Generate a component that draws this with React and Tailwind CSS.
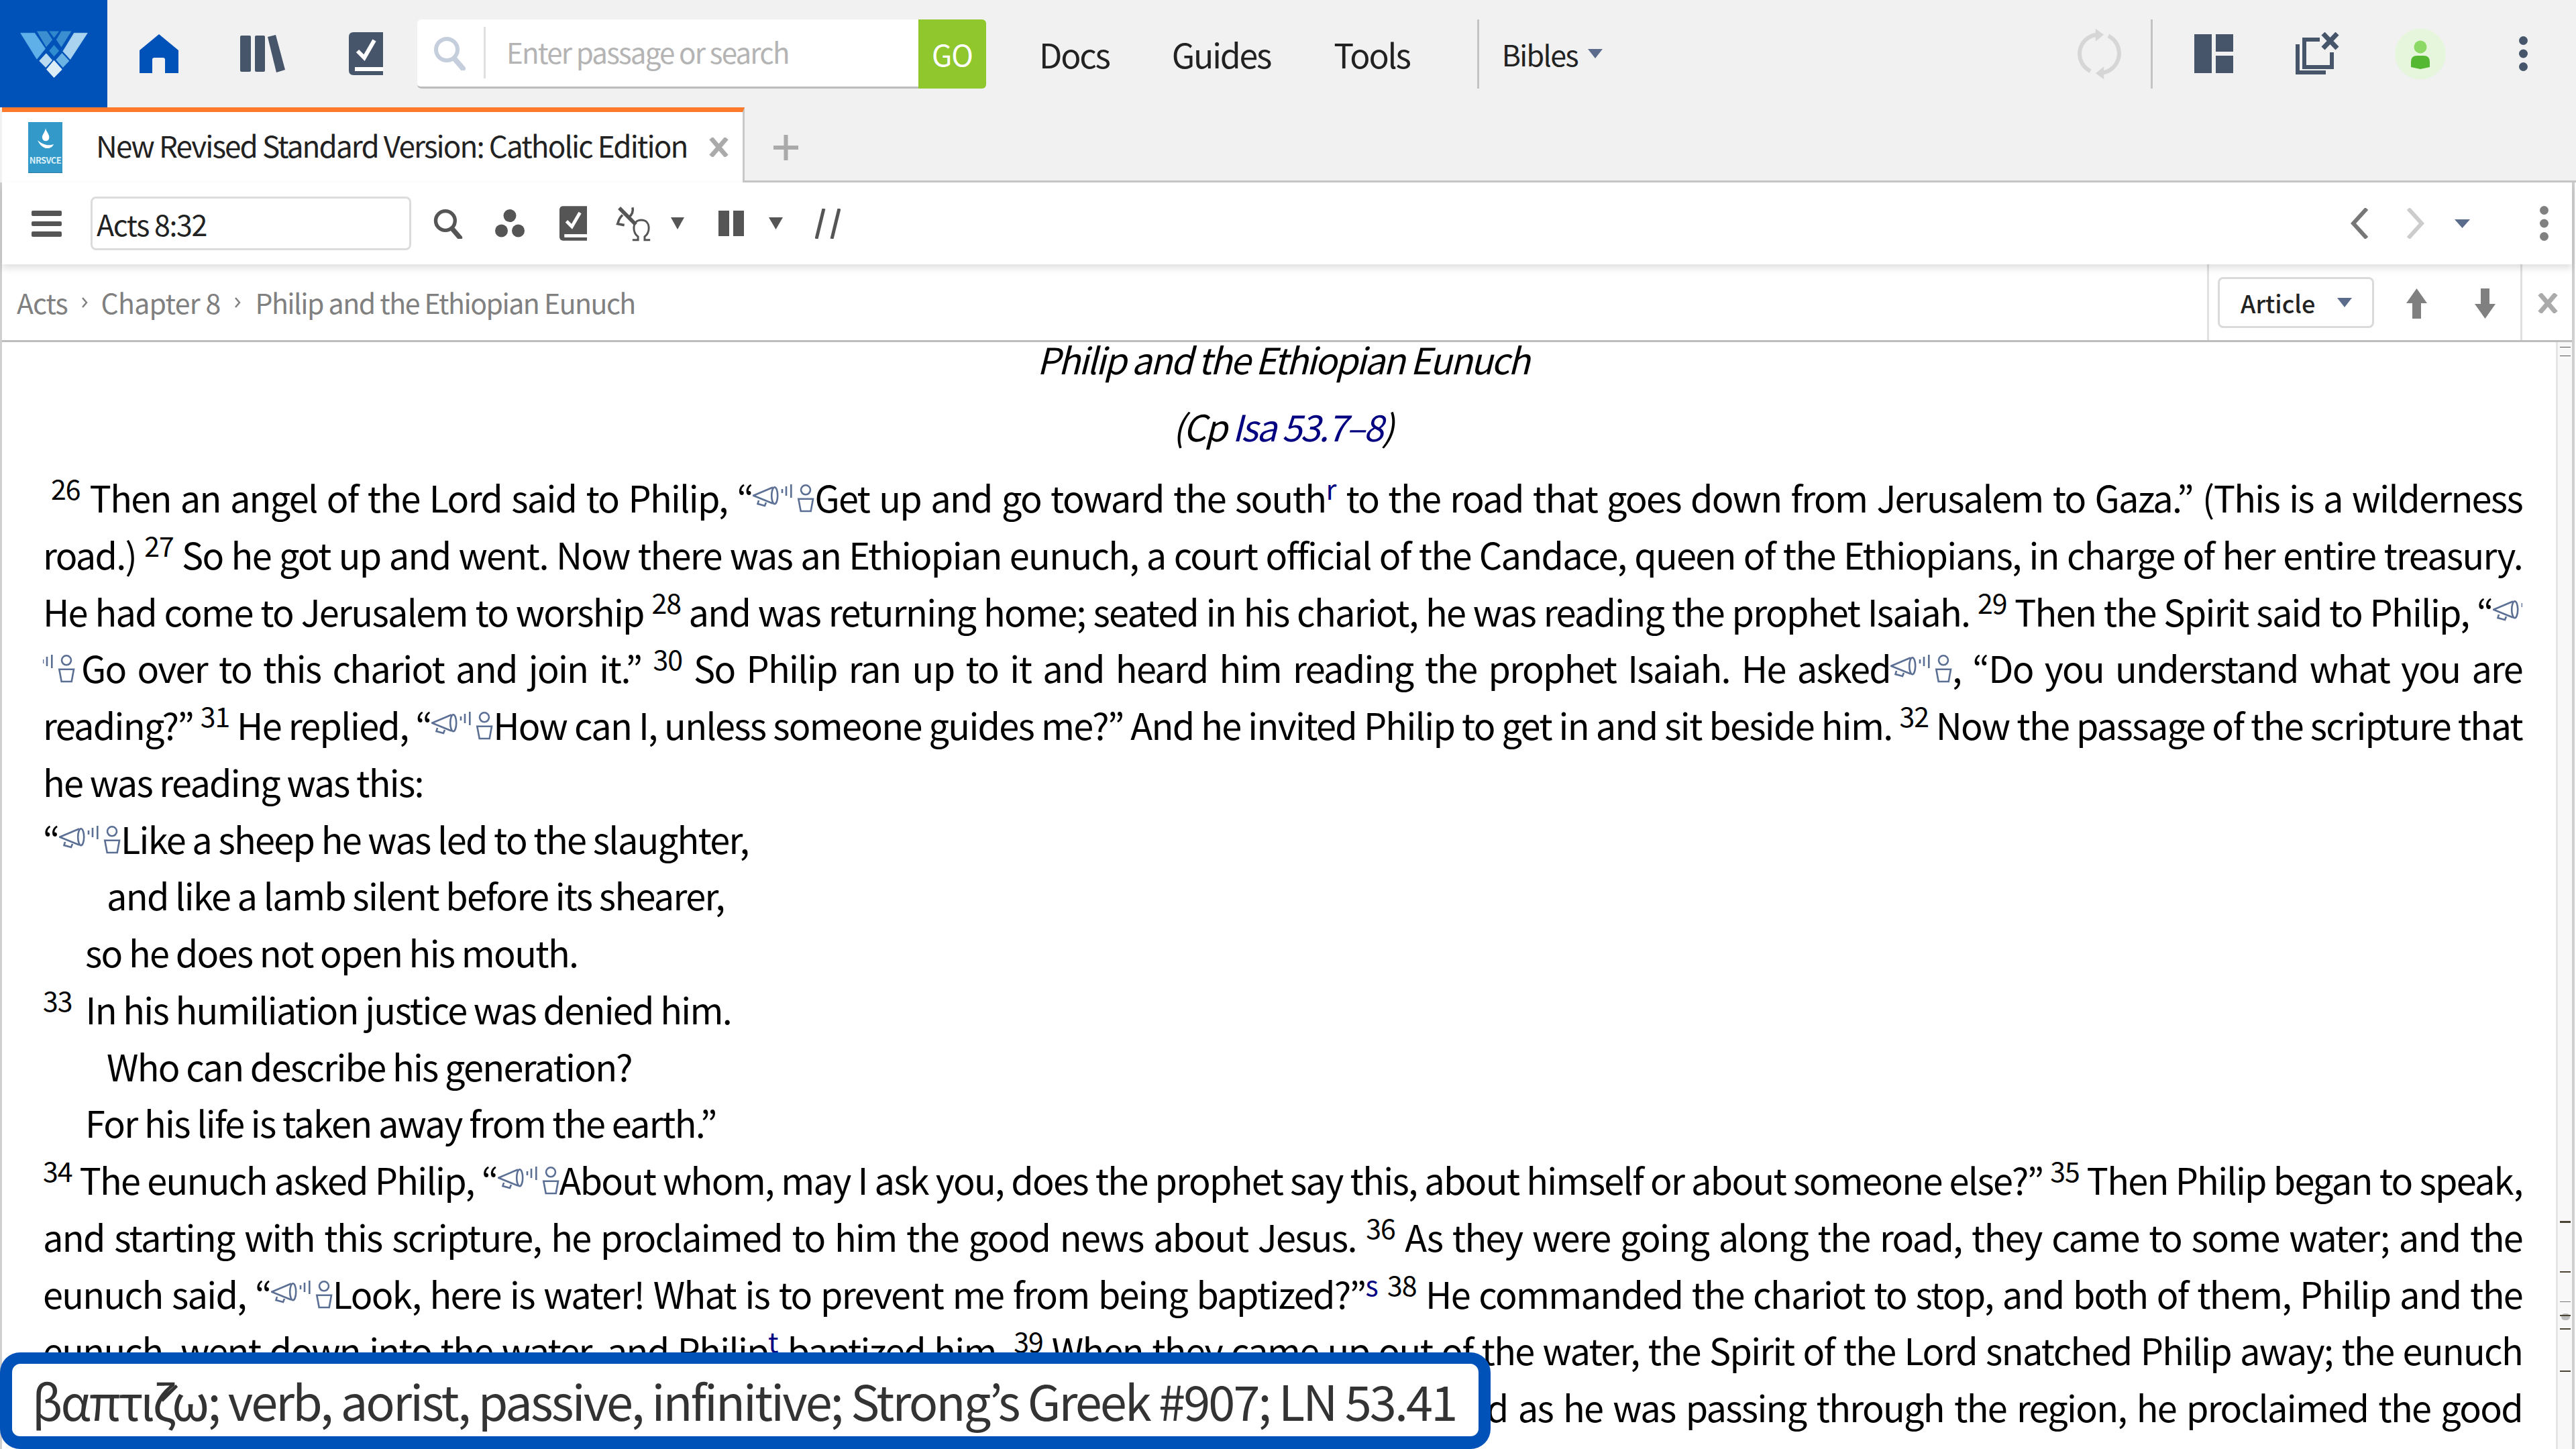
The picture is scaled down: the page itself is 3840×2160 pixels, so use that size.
const F = '"Noto Sans CJK KR", "Noto Sans", sans-serif';

function Cue({ part = "all" }) {
  const vb = part === "all" ? "0 0 92 42" : part === "mega" ? "0 0 44 42" : "44 0 48 42";
  const w = part === "all" ? 92 : part === "mega" ? 44 : 48;
  return (
    <svg viewBox={vb} width={w} height={42} className="inline align-baseline" fill="none" stroke="#5b6f94" strokeWidth="2.6">
      <ellipse cx="32.7" cy="16.7" rx="4.5" ry="12.5" />
      <path d="M30 4.5 L1 16.7 L30 28.5" />
      <path d="M9 24 L7.5 29 L18 32 L20 27" />
      <path d="M44 7 V13 M50 3 V17 M57.3 0 V20" />
      <circle cx="79" cy="8.3" r="7" />
      <path d="M68.3 21.7 H90 L86.7 40 H71.7 Z" />
    </svg>
  );
}

function V({ n }) {
  return <span className="text-[41px] leading-none align-[19px] tracking-[-1px]">{n}</span>;
}
function Note({ c }) {
  return <span className="text-[41px] leading-none align-[19px] tracking-normal text-[#000080]">{c}</span>;
}

function Line({ just, className = "", children }) {
  return (
    <div className={`h-[84.75px] leading-[84.75px] whitespace-nowrap ${just ? "[text-align-last:justify]" : ""} ${className}`}>
      {children}
    </div>
  );
}

function Kebab({ color }) {
  return (
    <svg width="13" height="52" viewBox="0 0 13 52" fill={color}>
      <circle cx="6.5" cy="6.5" r="6.5" />
      <circle cx="6.5" cy="26" r="6.5" />
      <circle cx="6.5" cy="45.5" r="6.5" />
    </svg>
  );
}
function Caret({ w = 22, h = 14, color = "#5b6b8c", className = "" }) {
  return (
    <svg width={w} height={h} viewBox="0 0 22 14" preserveAspectRatio="none" fill={color} className={className}>
      <path d="M0 0 H22 L11 14 Z" />
    </svg>
  );
}
function CheckBook({ w, h, color }) {
  return (
    <svg width={w} height={h} viewBox="0 0 51 64">
      <path d="M7 0 H51 V64 H7 Q0 64 0 57 V7 Q0 0 7 0 Z" fill={color} />
      <rect x="9" y="52" width="42" height="6" fill="#fff" />
      <path d="M13 28 L23 38 L38 12" fill="none" stroke="#fff" strokeWidth="6" />
    </svg>
  );
}
function Mag({ w, h, color }) {
  return (
    <svg width={w} height={h} viewBox="0 0 50 50" fill="none" stroke={color}>
      <circle cx="21" cy="20" r="16" strokeWidth="6" />
      <path d="M32 33 L45 48" strokeWidth="8" strokeLinecap="round" />
    </svg>
  );
}
function Cross({ s = 30, color = "#aaa" }) {
  return (
    <svg width={s} height={s} viewBox="0 0 30 30" fill="none" stroke={color} strokeWidth="7">
      <path d="M3 1 L27 29 M27 1 L3 29" />
    </svg>
  );
}

function Logo() {
  return (
    <svg width="101" height="71" viewBox="30 28 304 212" strokeLinejoin="round">
      <path d="M32 40 H95 L143 110 L105 157 Z" fill="#5fb0e8" stroke="#5fb0e8" strokeWidth="2" />
      <path d="M332 40 H272 L222 122 L255 158 Z" fill="#a9d3ee" stroke="#a9d3ee" strokeWidth="2" />
      <path d="M105 32 H150 L175 70 L147 103 Z" fill="#3b8fd0" />
      <path d="M160 32 H205 L182 62 Z" fill="#2f87cc" />
      <path d="M215 32 H260 L215 103 L192 70 Z" fill="#3b8fd0" />
      <path d="M182 93 L205 120 L182 145 L160 120 Z" fill="#2f8ccf" />
      <path d="M147 133 L172 162 L145 192 L118 165 Z" fill="#b9daf0" stroke="#b9daf0" strokeWidth="4" />
      <path d="M218 132 L248 165 L222 192 L193 160 Z" fill="#6bb3e3" stroke="#6bb3e3" strokeWidth="4" />
      <path d="M182 165 L216 203 L182 238 L150 203 Z" fill="#dcedf8" stroke="#dcedf8" strokeWidth="4" />
    </svg>
  );
}

export default function App() {
  return (
    <div className="relative w-[3840px] h-[2160px] overflow-hidden bg-white text-[#222]" style={{ fontFamily: F }}>
      {/* top bar */}
      <div className="flex items-center h-[160px] bg-[#f1f1f1]">
        <div className="flex items-center justify-center w-[160px] h-[160px] bg-[#0052b8]">
          <Logo />
        </div>
        <svg className="ml-[48px]" width="58" height="58" viewBox="0 0 58 58" fill="#0052b8">
          <path d="M29 0 L58 24 V58 H38 V38 Q38 35 35 35 H22 Q19 35 19 38 V58 H0 V24 Z" />
        </svg>
        <svg className="ml-[92px]" width="68" height="56" viewBox="0 0 68 56" fill="#47556b">
          <rect x="0" y="1" width="16" height="54" rx="2" />
          <rect x="22" y="1" width="15" height="54" rx="2" />
          <path d="M41 3 L53 0 L67 52 L54 56 Z" />
        </svg>
        <div className="ml-[94px]">
          <CheckBook w={51} h={64} color="#47556b" />
        </div>
        <div className="ml-[51px] flex w-[848px] h-[103px]">
          <div className="flex items-center flex-1 bg-white rounded-l-[6px] border-b-[3px] border-[#bcbcbc]">
            <div className="ml-[23px]">
              <Mag w={50} h={52} color="#c5cedd" />
            </div>
            <div className="ml-[26px] w-[3px] h-[77px] bg-[#e0e0e0]" />
            <span className="ml-[31px] -mt-[3px] text-[42px] leading-none tracking-[-1.8px] text-[#b4b4b4] whitespace-nowrap">Enter passage or search</span>
          </div>
          <div className="flex items-center justify-center w-[101px] bg-[#8fc72c] rounded-r-[6px] text-white text-[44px] leading-none tracking-[-1px]">GO</div>
        </div>
        <span className="ml-[79px] text-[50px] leading-none tracking-[-2.2px]">Docs</span>
        <span className="ml-[93px] text-[50px] leading-none tracking-[-2.2px]">Guides</span>
        <span className="ml-[94px] text-[50px] leading-none tracking-[-2.2px]">Tools</span>
        <div className="ml-[100px] w-[3px] h-[103px] bg-[#c4c4c4]" />
        <span className="ml-[34px] text-[43px] leading-none tracking-[-1.6px]">Bibles</span>
        <Caret className="ml-[15px]" />
        <div className="ml-auto flex items-center pr-[72px]">
          <svg width="67" height="80" viewBox="35 30 200 240" fill="none" stroke="#d6d6d6" strokeWidth="18">
            <path d="M125 65 A86 86 0 0 0 95 228" />
            <path d="M118 38 L155 65 L118 95 Z" fill="#d6d6d6" stroke="none" />
            <path d="M175 70 A88 88 0 0 1 145 236" />
            <path d="M155 208 L118 238 L155 265 Z" fill="#d6d6d6" stroke="none" />
          </svg>
          <div className="ml-[43px] w-[3px] h-[103px] bg-[#c4c4c4]" />
          <svg className="ml-[62px]" width="58" height="58" viewBox="0 0 58 58" fill="#47556b">
            <rect x="0" y="0" width="26" height="58" />
            <rect x="32" y="0" width="26" height="26" />
            <rect x="32" y="32" width="26" height="26" />
          </svg>
          <svg className="ml-[93px]" width="65" height="64" viewBox="0 0 65 64" fill="none" stroke="#47556b">
            <path d="M3 18 V60 H45" strokeWidth="6" />
            <path d="M36 11 H13 V52 H54 V30" strokeWidth="6" />
            <path d="M41 2 L62 24 M62 2 L41 24" strokeWidth="7" />
          </svg>
          <svg className="ml-[83px]" width="76" height="77" viewBox="0 0 76 77">
            <circle cx="38" cy="38.5" r="38" fill="#e6f6dc" />
            <ellipse cx="38" cy="28" rx="9.5" ry="9.5" fill="#8cd966" />
            <path d="M24 50 Q24 41 33 41 H43 Q52 41 52 50 V58 L38 61 L24 58 Z" fill="#55b833" />
          </svg>
          <div className="ml-[109px]">
            <Kebab color="#47556b" />
          </div>
        </div>
      </div>

      {/* tab row */}
      <div className="flex h-[112px] bg-[#f1f1f1]">
        <div className="ml-[3px] flex items-center w-[1107px] bg-white border-t-[7px] border-r-[3px] border-[#ff7a2b] border-r-[#c8c8c8]">
          <div className="ml-[39px] flex flex-col items-center w-[51px] h-[76px] bg-[#3399c9] border-b-[1px] border-[#2a7da5]">
            <svg className="mt-[9px]" width="26" height="34" viewBox="0 0 26 34" fill="#fff">
              <path d="M13 0 C14 6 20 10 18 16 C16 21 9 20 8 15 C7 10 12 7 13 0 Z" />
              <path d="M1 18 C6 22 14 28 25 24 C22 32 8 34 1 18 Z" />
            </svg>
            <span className="mt-[7px] text-[13px] leading-none font-bold tracking-[-0.6px] text-[#d8eef8] whitespace-nowrap">NRSVCE</span>
          </div>
          <span className="ml-[50px] -mt-[7px] text-[44px] leading-none tracking-[-1.9px] text-[#222] whitespace-nowrap">New Revised Standard Version: Catholic Edition</span>
          <div className="ml-auto mr-[21px]">
            <Cross s={29} />
          </div>
        </div>
        <div className="flex-1 flex items-center pt-[10px] border-b-[3px] border-[#c6c6c6]">
          <svg className="ml-[43px]" width="37" height="38" viewBox="0 0 37 38" fill="none" stroke="#aaa" strokeWidth="6">
            <path d="M18.5 0 V38 M0 19 H37" />
          </svg>
        </div>
      </div>

      {/* frame */}
      <div className="flex flex-col h-[1888px] border-l-[3px] border-r-[4px] mr-[2px] border-[#cfcfcf]">
        {/* toolbar */}
        <div className="relative z-10 flex items-center h-[122px] shrink-0 bg-white shadow-[0_6px_10px_rgba(0,0,0,0.12)]">
          <svg className="ml-[44px]" width="45" height="39" viewBox="0 0 45 39" fill="#555">
            <rect y="0" width="45" height="8" rx="2" />
            <rect y="16" width="45" height="7" rx="2" />
            <rect y="31" width="45" height="8" rx="2" />
          </svg>
          <div className="ml-[43px] flex items-center w-[478px] h-[80px] border-[3px] border-[#dcdcdc] rounded-[8px] pl-[6px] text-[43px] leading-none tracking-[-1.4px] text-[#222]">
            Acts 8:32
          </div>
          <div className="ml-[32px]">
            <Mag w={45} h={45} color="#555" />
          </div>
          <svg className="ml-[48px]" width="44" height="42" viewBox="0 0 44 42" fill="#555">
            <circle cx="22" cy="9.5" r="9.5" />
            <circle cx="9.5" cy="32" r="9.5" />
            <circle cx="34.5" cy="32" r="9.5" />
          </svg>
          <div className="ml-[52px]">
            <CheckBook w={41} h={52} color="#555" />
          </div>
          <svg className="ml-[43px]" width="53" height="56" viewBox="40 35 160 170" fill="none" stroke="#555">
            <path d="M55 50 L130 125" strokeWidth="17" />
            <path d="M115 48 C120 65 112 82 100 90" strokeWidth="11" />
            <path d="M70 82 C50 100 50 118 48 122 L78 128" strokeWidth="11" />
            <path d="M115 195 H140 V180 C115 165 110 105 155 105 C200 105 195 165 170 180 V195 H195" strokeWidth="9" />
          </svg>
          <Caret className="ml-[29px]" w={20} h={18} color="#555" />
          <svg className="ml-[51px]" width="38" height="38" viewBox="0 0 38 38" fill="#555">
            <rect x="0" width="16" height="38" />
            <rect x="22" width="16" height="38" />
          </svg>
          <Caret className="ml-[37px]" w={21} h={18} color="#555" />
          <svg className="ml-[48px]" width="38" height="45" viewBox="0 0 38 45" fill="none" stroke="#555" strokeWidth="5">
            <path d="M13 0 L2 45 M36 0 L25 45" />
          </svg>
          <div className="ml-auto flex items-center mr-[35px]">
            <svg width="26" height="46" viewBox="0 0 26 46" fill="none" stroke="#777" strokeWidth="6">
              <path d="M24 1 L4 23 L24 45" />
            </svg>
            <svg className="ml-[58px]" width="26" height="46" viewBox="0 0 26 46" fill="none" stroke="#ccc" strokeWidth="6">
              <path d="M2 1 L22 23 L2 45" />
            </svg>
            <Caret className="ml-[45px]" w={23} h={13} />
            <div className="ml-[104px]">
              <Kebab color="#808080" />
            </div>
          </div>
        </div>

        {/* breadcrumb */}
        <div className="flex items-stretch h-[116px] shrink-0 border-b-[3px] border-[#bdbdbd]">
          <div className="flex items-center flex-1 pl-[22px] text-[41px] leading-none tracking-[-1px] text-[#808080]">
            <span>Acts</span>
            <svg className="mx-[20px]" width="10" height="16" viewBox="0 0 10 16" fill="none" stroke="#808080" strokeWidth="2.5">
              <path d="M2 1 L8 8 L2 15" />
            </svg>
            <span className="tracking-[-0.7px]">Chapter 8</span>
            <svg className="mx-[21px]" width="10" height="16" viewBox="0 0 10 16" fill="none" stroke="#808080" strokeWidth="2.5">
              <path d="M2 1 L8 8 L2 15" />
            </svg>
            <span className="tracking-[-1.5px]">Philip and the Ethiopian Eunuch</span>
          </div>
          <div className="flex items-center w-[467px] border-l-[3px] border-[#e0e0e0]">
            <div className="ml-[13px] flex items-center w-[233px] h-[76px] border-[3px] border-[#dadada] rounded-[8px] pl-[31px] text-[36px] leading-none font-medium text-[#222]">
              Article
              <Caret className="ml-[33px]" />
            </div>
            <svg className="ml-[48px] mt-[3px]" width="31" height="45" viewBox="0 0 31 45" fill="#808080">
              <path d="M15.5 0 L31 22 H22 V45 H9 V22 H0 Z" />
            </svg>
            <svg className="ml-[71px] mt-[3px]" width="31" height="45" viewBox="0 0 31 45" fill="#808080">
              <path d="M15.5 45 L31 23 H22 V0 H9 V23 H0 Z" />
            </svg>
          </div>
          <div className="flex items-center justify-center w-[77px] pl-[2px] pt-[3px] border-l-[3px] border-[#e0e0e0]">
            <Cross s={30} />
          </div>
        </div>

        {/* reading area */}
        <div className="flex flex-1 min-h-0">
          <div className="flex-1 overflow-hidden pl-[61px] text-black text-[54px] tracking-[-1.7px]">
            <div className="w-[3696px]">
              <div className="text-center italic tracking-[-2.4px]">
                <div className="h-[68px] leading-[50px]">Philip and the Ethiopian Eunuch</div>
                <div className="h-[114px] leading-[114px]">
                  (Cp <span className="text-[#000080]">Isa 53.7–8</span>)
                </div>
              </div>
              <div className="pt-[7px]">
                <Line just className="pl-[12px]">
                  <V n="26" /> Then an angel of the Lord said to Philip, “<Cue />Get up and go toward the south<Note c="r" /> to the road that goes down from Jerusalem to Gaza.” (This is a wilderness
                </Line>
                <Line just>
                  road.) <V n="27" /> So he got up and went. Now there was an Ethiopian eunuch, a court official of the Candace, queen of the Ethiopians, in charge of her entire treasury.
                </Line>
                <Line just>
                  He had come to Jerusalem to worship <V n="28" /> and was returning home; seated in his chariot, he was reading the prophet Isaiah. <V n="29" /> Then the Spirit said to Philip, “<Cue part="mega" />
                </Line>
                <Line just>
                  <Cue part="rest" /><span className="ml-[9px]">Go over to this chariot and join it.”</span> <V n="30" /> So Philip ran up to it and heard him reading the prophet Isaiah. He asked<Cue />, “Do you understand what you are
                </Line>
                <Line just>
                  reading?” <V n="31" /> He replied, “<Cue />How can I, unless someone guides me?” And he invited Philip to get in and sit beside him. <V n="32" /> Now the passage of the scripture that
                </Line>
                <Line>he was reading was this:</Line>
                <Line>“<Cue />Like a sheep he was led to the slaughter,</Line>
                <Line className="pl-[95px]">and like a lamb silent before its shearer,</Line>
                <Line className="pl-[63px]">so he does not open his mouth.</Line>
                <Line>
                  <V n="33" /><span className="ml-[20px]">In his humiliation justice was denied him.</span>
                </Line>
                <Line className="pl-[95px]">Who can describe his generation?</Line>
                <Line className="pl-[63px]">For his life is taken away from the earth.”</Line>
                <Line just>
                  <V n="34" /> The eunuch asked Philip, “<Cue />About whom, may I ask you, does the prophet say this, about himself or about someone else?” <V n="35" /> Then Philip began to speak,
                </Line>
                <Line just>
                  and starting with this scripture, he proclaimed to him the good news about Jesus. <V n="36" /> As they were going along the road, they came to some water; and the
                </Line>
                <Line just>
                  eunuch said, “<Cue />Look, here is water! What is to prevent me from being baptized?”<Note c="s" /> <V n="38" /> He commanded the chariot to stop, and both of them, Philip and the
                </Line>
                <Line just>
                  eunuch, went down into the water, and Philip<Note c="t" /> baptized him. <V n="39" /> When they came up out of the water, the Spirit of the Lord snatched Philip away; the eunuch
                </Line>
                <Line just>
                  saw him no more, and went on his way rejoicing. <V n="40" /> But Philip found himself at Azotus, and as he was passing through the region, he proclaimed the good
                </Line>
              </div>
            </div>
          </div>
          {/* scroll overview */}
          <div className="relative w-[24px] shrink-0 bg-[#f8f8f8] border-l-[3px] border-[#e5e5e5]">
            <div className="absolute left-[3px] w-[16px] top-[7px] h-[1px] bg-[#555]" />
            <div className="absolute left-[3px] w-[16px] top-[20px] h-[1px] bg-[#555]" />
            <div className="absolute left-[3px] w-[16px] top-[1310px] h-[3px] bg-[#4a4435]" />
            <div className="absolute left-[3px] w-[16px] top-[1385px] h-[2px] bg-[#4a4435]" />
            <div className="absolute left-[3px] w-[16px] top-[1430px] h-[1px] bg-[#777]" />
            <div className="absolute left-[5px] w-[13px] top-[1448px] h-[10px] rounded-full bg-[#bbb]" />
            <div className="absolute left-[3px] w-[16px] top-[1450px] h-[2px] bg-[#4a4435]" />
            <div className="absolute left-[3px] w-[16px] top-[1470px] h-[2px] bg-[#4a4435]" />
            <div className="absolute left-[3px] w-[16px] top-[1533px] h-[2px] bg-[#4a4435]" />
          </div>
        </div>
      </div>

      {/* morph popup */}
      <div className="absolute left-0 bottom-0 flex items-center w-[2222px] h-[144px] pl-[30px] bg-white border-x-[18px] border-t-[17px] border-b-[19px] border-[#0052b8] rounded-[30px] text-[72px] leading-none tracking-[-2.85px] text-[#333] whitespace-nowrap">
        βαπτίζω; verb, aorist, passive, infinitive; Strong’s Greek #907; LN 53.41
      </div>
    </div>
  );
}
